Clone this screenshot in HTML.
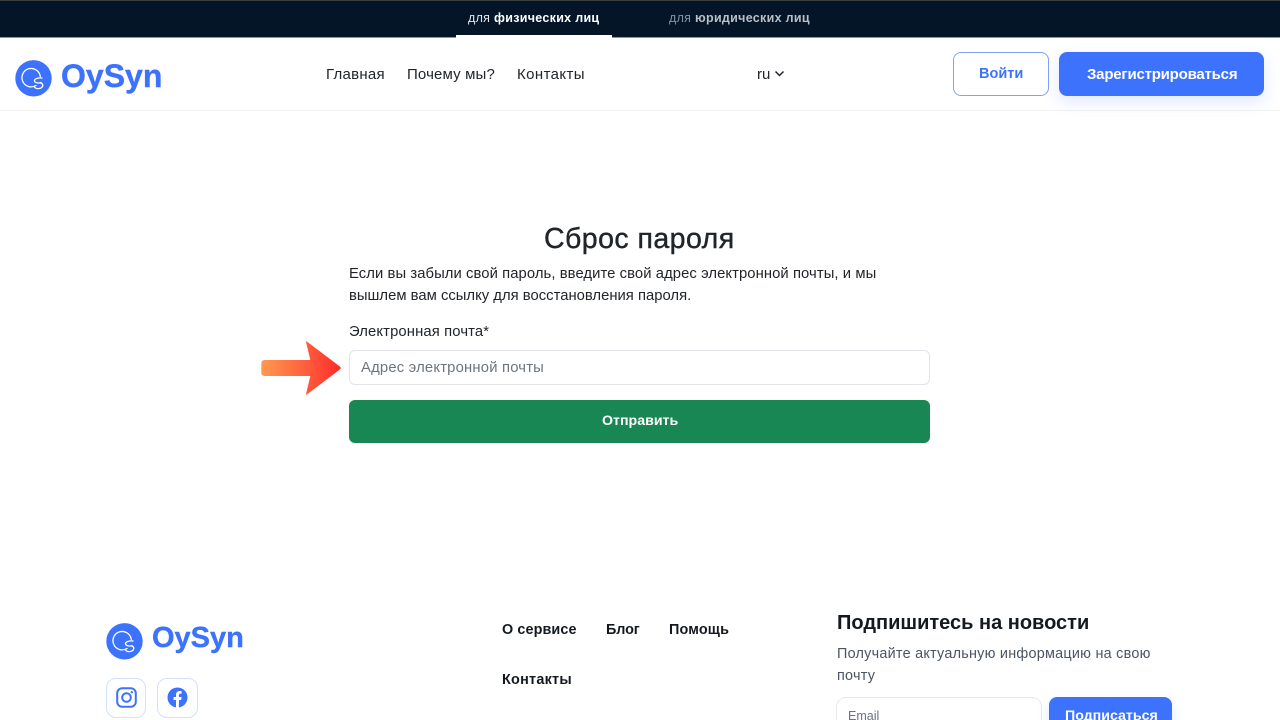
<!DOCTYPE html>
<html lang="ru"><head><meta charset="utf-8"><title>Сброс пароля</title>
<style>
*{box-sizing:border-box}
html,body{margin:0;padding:0;width:1280px;height:720px;overflow:hidden;background:#fff;font-family:"Liberation Sans",sans-serif}
#p{position:relative;width:1280px;height:720px;overflow:hidden;background:#fff}
.t{position:absolute;white-space:nowrap;line-height:1}
.box{position:absolute}
</style></head><body><div id="p">
<div class="box" style="left:0;top:0;width:1280px;height:38px;background:#031527;border-top:1px solid #3a3d3c;border-bottom:1px solid #8d97a3"></div>
<div class="box" style="left:456px;top:35px;width:156px;height:3px;background:#fff"></div>
<div class="t" style="left:468px;top:12px;font-size:12.5px;color:#e3e6ea;letter-spacing:.3px">для <b style="color:#fff">физических лиц</b></div>
<div class="t" style="left:669px;top:12px;font-size:12.5px;color:#8493a6;letter-spacing:.3px">для <b style="color:#b9bfc7">юридических лиц</b></div>
<div class="box" style="left:0;top:110px;width:1280px;height:1px;background:#f3f3f4"></div>

<svg class="box" style="left:15px;top:60px" width="37" height="37" viewBox="0 0 37 37"><circle cx="18.500" cy="18.300" r="18.200" fill="#3c72fc"/><path d="M21 25.500A9.200 9.200 0 1 1 25.300 16.500M27 18C23 17.500 19 19 19.500 21C20 23 24 23.500 26 22.500M26 23C29 24.500 28 28 24 28.500C21 29 19 27.500 19.500 26" fill="none" stroke="#fff" stroke-width="1.300" stroke-linecap="round"/></svg>
<div class="t" style="left:61px;top:60px;font-size:32px;font-weight:700;color:#3c72fc;-webkit-text-stroke:.4px #3c72fc">OySyn</div>

<div class="t" style="left:326px;top:67px;font-size:15px;color:#212529;letter-spacing:.25px">Главная</div>
<div class="t" style="left:407px;top:67px;font-size:15px;color:#212529;letter-spacing:.14px">Почему мы?</div>
<div class="t" style="left:517px;top:67px;font-size:15px;color:#212529;letter-spacing:.4px">Контакты</div>
<div class="t" style="left:757px;top:67px;font-size:15px;color:#212529">ru</div>
<svg class="box" style="left:774px;top:70px" width="11" height="8" viewBox="0 0 11 8"><path d="M1.500 1.500 5.500 5.500 9.500 1.500" fill="none" stroke="#212529" stroke-width="1.500"/></svg>

<div class="box" style="left:953px;top:52px;width:96px;height:44px;border:1px solid #7fa2f8;border-radius:8px;background:#fff"></div>
<div class="t" style="left:979px;top:67px;font-size:14.500px;font-weight:700;color:#3c72fc">Войти</div>
<div class="box" style="left:1059px;top:52px;width:205px;height:44px;border-radius:8px;background:#3c72fc;box-shadow:0 6px 16px rgba(60,114,252,.16)"></div>
<div class="t" style="left:1087px;top:67px;font-size:15px;font-weight:700;color:#fff;letter-spacing:-.21px">Зарегистрироваться</div>

<div class="t" style="left:544px;top:225px;font-size:28.500px;color:#212529;-webkit-text-stroke:.4px #212529;letter-spacing:.45px">Сброс пароля</div>
<div class="t" style="left:349px;top:267px;font-size:14.800px;color:#212529;letter-spacing:.08px">Если вы забыли свой пароль, введите свой адрес электронной почты, и мы</div>
<div class="t" style="left:349px;top:289px;font-size:14.800px;color:#212529;letter-spacing:.02px">вышлем вам ссылку для восстановления пароля.</div>
<div class="t" style="left:349px;top:325px;font-size:14.800px;color:#212529;letter-spacing:.13px">Электронная почта*</div>

<div class="box" style="left:349px;top:350px;width:581px;height:35px;border:1px solid #e1e4e8;border-radius:6px;background:#fff"></div>
<div class="t" style="left:361px;top:361px;font-size:14.800px;color:#6c757d;letter-spacing:.2px">Адрес электронной почты</div>

<svg class="box" style="left:260px;top:340px" width="84" height="57" viewBox="0 0 84 57"><defs><linearGradient id="g" x1="0" x2="1" y1="0" y2="0"><stop offset="0" stop-color="#ff9a4f"/><stop offset=".55" stop-color="#ff5f3d"/><stop offset="1" stop-color="#ff2a2a"/></linearGradient></defs><path d="M5 20H50.300L46 2Q45.700 .8 47 1.600L80 26.600Q81.500 28 80 29.400L47 54.400Q45.700 55.200 46 54L50.300 36H5Q1.300 36 1.300 32.500V24Q1.300 20 5 20Z" fill="url(#g)"/></svg>

<div class="box" style="left:349px;top:400px;width:581px;height:43px;background:#198754;border-radius:6px"></div>
<div class="t" style="left:602px;top:414px;font-size:14.200px;font-weight:700;color:#fff">Отправить</div>

<svg class="box" style="left:106px;top:623px" width="37" height="37" viewBox="0 0 37 37"><circle cx="18.500" cy="18.300" r="18.200" fill="#3c72fc"/><path d="M21 25.500A9.200 9.200 0 1 1 25.300 16.500M27 18C23 17.500 19 19 19.500 21C20 23 24 23.500 26 22.500M26 23C29 24.500 28 28 24 28.500C21 29 19 27.500 19.500 26" fill="none" stroke="#fff" stroke-width="1.300" stroke-linecap="round"/></svg>
<div class="t" style="left:152px;top:624px;font-size:29px;font-weight:700;color:#3c72fc;-webkit-text-stroke:.4px #3c72fc">OySyn</div>

<div class="box" style="left:106px;top:678px;width:40px;height:40px;border:1px solid #d3e0fb;border-radius:10px"></div>
<div class="box" style="left:157px;top:678px;width:41px;height:40px;border:1px solid #d3e0fb;border-radius:10px"></div>
<svg class="box" style="left:116px;top:687px" width="21" height="21" viewBox="0 0 21 21"><rect x="1.200" y="1.200" width="18.600" height="18.600" rx="5" fill="none" stroke="#3c72fc" stroke-width="2"/><circle cx="10.500" cy="10.500" r="4.300" fill="none" stroke="#3c72fc" stroke-width="2"/><circle cx="15.800" cy="5.200" r="1.200" fill="#3c72fc"/></svg>
<svg class="box" style="left:167px;top:687px" width="21" height="21" viewBox="0 0 21 21"><circle cx="10.500" cy="10.500" r="10" fill="#3c72fc"/><path d="M9 20.500V13H6.500V10H9V7.800C9 5.300 10.500 4 12.700 4c1 0 1.900.2 1.900.2v2.400h-1.100c-1.200 0-1.600.7-1.600 1.500V10h2.700l-.4 3h-2.300v7.500z" fill="#fff"/></svg>

<div class="t" style="left:502px;top:623px;font-size:14.400px;font-weight:700;color:#14191f;letter-spacing:.1px">О сервисе</div>
<div class="t" style="left:606px;top:623px;font-size:14.400px;font-weight:700;color:#14191f;letter-spacing:-.1px">Блог</div>
<div class="t" style="left:669px;top:623px;font-size:14.400px;font-weight:700;color:#14191f;letter-spacing:.15px">Помощь</div>
<div class="t" style="left:502px;top:673px;font-size:14.400px;font-weight:700;color:#14191f;letter-spacing:.25px">Контакты</div>

<div class="t" style="left:837px;top:613px;font-size:20px;font-weight:700;color:#14191f">Подпишитесь на новости</div>
<div class="t" style="left:837px;top:647px;font-size:14.400px;color:#4b5563;letter-spacing:.25px">Получайте актуальную информацию на свою</div>
<div class="t" style="left:837px;top:669px;font-size:14.400px;color:#4b5563;letter-spacing:.25px">почту</div>

<div class="box" style="left:836px;top:697px;width:206px;height:40px;border:1px solid #e4e9f2;border-radius:10px;background:#fff"></div>
<div class="t" style="left:848px;top:710px;font-size:12.500px;color:#6b7280">Email</div>
<div class="box" style="left:1049px;top:697px;width:123px;height:40px;border-radius:8px;background:#3c72fc;box-shadow:0 6px 14px rgba(60,114,252,.16)"></div>
<div class="t" style="left:1065px;top:709px;font-size:14.200px;font-weight:700;color:#fff">Подписаться</div>
</div></body></html>
